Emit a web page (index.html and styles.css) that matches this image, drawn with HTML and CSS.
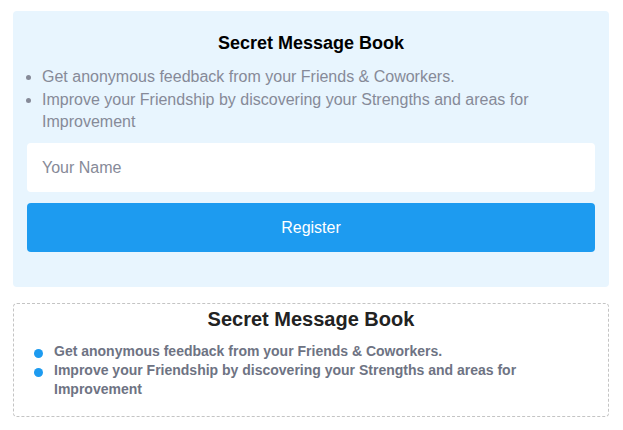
FILE: index.html
```html
<!DOCTYPE html>
<html lang="en">
<head>
    <meta charset="UTF-8">
    <meta name="viewport" content="width=device-width, initial-scale=1.0">
    <title>Secret Message Book</title>
    <link rel="stylesheet" href="styles.css">
</head>
<body>
    <div class="register-card">
        <h2>Secret Message Book</h2>
        <ul class="features">
            <li>Get anonymous feedback from your Friends &amp; Coworkers.</li>
            <li>Improve your Friendship by discovering your Strengths and areas for Improvement</li>
        </ul>
        <input type="text" class="name-input" placeholder="Your Name">
        <button class="register-btn">Register</button>
    </div>

    <div class="info-card">
        <h2>Secret Message Book</h2>
        <ul class="info-list">
            <li>Get anonymous feedback from your Friends &amp; Coworkers.</li>
            <li>Improve your Friendship by discovering your Strengths and areas for Improvement</li>
        </ul>
    </div>
</body>
</html>
```

FILE: styles.css
```css
body {
    font-family: "Liberation Sans", Arial, sans-serif;
    margin: 0;
    padding: 11px 14px 0 13px;
    background: #fff;
}
.register-card {
    background: #e8f5fe;
    border-radius: 4px;
    padding: 15px 14px 35px;
}
.register-card h2 {
    font-size: 18px;
    line-height: 22px;
    text-align: center;
    color: #000;
    margin: 6px 0 12px;
}
.features {
    margin: 0 0 9px;
    padding-left: 15px;
    color: #868a98;
    font-size: 16px;
    line-height: 22.5px;
}
.name-input {
    display: block;
    box-sizing: border-box;
    width: 100%;
    height: 49px;
    border: none;
    border-radius: 4px;
    background: #fff;
    padding: 2px 15px 0;
    font-family: inherit;
    font-size: 16px;
    outline: none;
}
.name-input::placeholder { color: #868a98; }
.register-btn {
    display: block;
    width: 100%;
    height: 49px;
    margin-top: 11px;
    padding-top: 3px;
    border: none;
    border-radius: 4px;
    background: #1d9bf0;
    color: #fff;
    font-family: inherit;
    font-size: 16px;
    cursor: pointer;
}
.info-card {
    margin-top: 16px;
    border: 1px dashed #c4c4c4;
    border-radius: 4px;
    padding: 3px 14px 17px;
}
.info-card h2 {
    font-size: 20px;
    line-height: 24px;
    text-align: center;
    color: #222;
    margin: 0 0 11px;
}
.info-list {
    list-style: none;
    margin: 0;
    padding-left: 26px;
    color: #6e7383;
    font-size: 14px;
    font-weight: bold;
    line-height: 19px;
}
.info-list li { position: relative; }
.info-list li::before {
    content: "";
    position: absolute;
    left: -20px;
    top: 7px;
    width: 9px;
    height: 9px;
    border-radius: 50%;
    background: #1d9bf0;
}
```
